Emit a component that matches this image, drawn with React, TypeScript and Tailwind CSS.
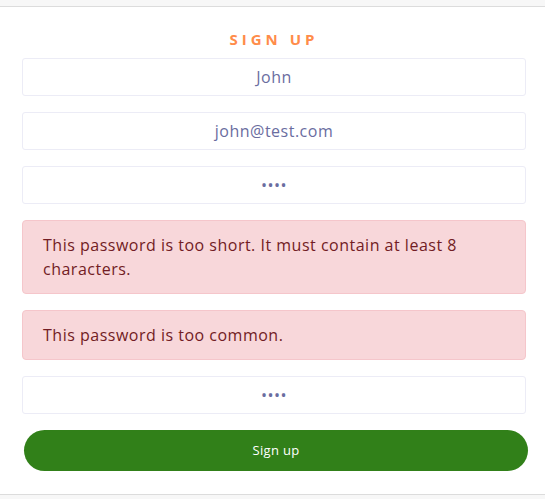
import React from 'react'

const inputCls =
  'block w-full h-[38px] border border-[#ececf6] rounded-[3px] bg-white text-center text-[16px] tracking-[0.5px] text-[#6a6d9f] outline-none'

const errors = [
  'This password is too short. It must contain at least 8 characters.',
  'This password is too common.',
]

export default function App() {
  return (
    <div className="min-h-[499px] bg-[#f7f7f7] pt-[6px] pb-[4px]" style={{ fontFamily: '"Open Sans", "Noto Sans", sans-serif' }}>
      <div className="bg-white border-y border-[#dcdcdc] pl-[22px] pr-[19px] pt-[23px] pb-[22px] h-[489px]">
        <h2 className="text-center text-[15px] font-bold tracking-[4px] text-[#ff8c4a] leading-[18px] mb-[10px]">
          SIGN UP
        </h2>
        <form className="flex flex-col" onSubmit={e => e.preventDefault()}>
          <input className={inputCls} defaultValue="John" />
          <input className={inputCls + ' mt-[16px]'} defaultValue="john@test.com" />
          <input className={inputCls + ' mt-[16px] text-[13px]'} type="password" defaultValue="1234" />
          {errors.map(err => (
            <div
              key={err}
              className="mt-[16px] rounded-[4px] border border-[#f5c6cb] bg-[#f8d7da] px-[20px] py-[12px] text-[16px] leading-[24px] tracking-[0.5px] text-[#721c24]"
            >
              {err}
            </div>
          ))}
          <input className={inputCls + ' mt-[16px] text-[13px]'} type="password" defaultValue="1234" />
          <button
            type="submit"
            className="mt-[16px] ml-[2px] w-full h-[41px] rounded-full bg-[#318019] text-white text-[13px] tracking-[0.3px]"
          >
            Sign up
          </button>
        </form>
      </div>
    </div>
  )
}
